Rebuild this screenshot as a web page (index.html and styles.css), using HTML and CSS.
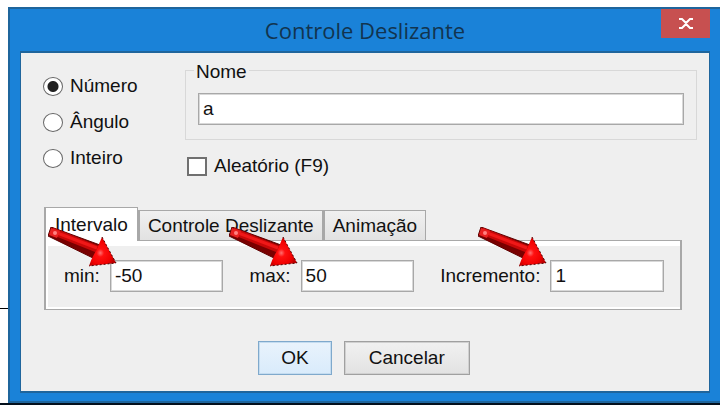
FILE: index.html
```html
<!DOCTYPE html>
<html lang="pt-BR">
<head>
    <meta charset="UTF-8">
    <title>Controle Deslizante</title>
    <link rel="stylesheet" href="styles.css">
</head>
<body>
    <div class="page">
        <div class="side-line"></div>
        <div class="dialog">
            <div class="title-bar">
                <h1>Controle Deslizante</h1>
                <button type="button" class="close-button" aria-label="Fechar">
                    <svg width="14" height="11" viewBox="0 0 14 11">
                        <path d="M0 1H3L7 5L11 1H14M0 10H3L7 6L11 10H14"/>
                    </svg>
                </button>
            </div>
            <form class="content">
                <div class="top-group">
                    <div class="radio-group">
                        <label><input type="radio" name="kind" checked>Número</label>
                        <label><input type="radio" name="kind">Ângulo</label>
                        <label><input type="radio" name="kind">Inteiro</label>
                    </div>
                    <div class="name-group">
                        <fieldset>
                            <legend><label for="nameInput">Nome</label></legend>
                            <input type="text" id="nameInput" value="a">
                        </fieldset>
                        <label class="random-row"><input type="checkbox">Aleatório (F9)</label>
                    </div>
                </div>

                <div class="tab-group">
                    <div class="tabs" role="tablist">
                        <button type="button" role="tab" aria-selected="true" class="tab active">Intervalo</button>
                        <button type="button" role="tab" aria-selected="false" class="tab">Controle Deslizante</button>
                        <button type="button" role="tab" aria-selected="false" class="tab">Animação</button>
                    </div>
                    <div class="tab-panel" role="tabpanel">
                        <label for="minInput">min:</label>
                        <input type="text" id="minInput" value="-50">
                        <label for="maxInput">max:</label>
                        <input type="text" id="maxInput" value="50">
                        <label for="stepInput">Incremento:</label>
                        <input type="text" id="stepInput" value="1">
                    </div>

                    <!-- Arrows pointing at the three fields -->
                    <svg class="arrow arrow-min" width="69" height="42" viewBox="0 0 69 42">
                        <defs>
                            <radialGradient id="head" cx="0.42" cy="0.55" r="0.55">
                                <stop offset="0" stop-color="#ff7070"/>
                                <stop offset="0.25" stop-color="#ff1010"/>
                                <stop offset="0.75" stop-color="#f00000"/>
                                <stop offset="1" stop-color="#c00000"/>
                            </radialGradient>
                            <g id="arrow">
                                <path d="M3 0L52 18L47 32L0 9Z" fill="#7a0000" stroke="#600000"/>
                                <path d="M4 4L49 22" stroke="#c80808" stroke-width="7" fill="none"/>
                                <path d="M4 4L49 21" stroke="#f01818" stroke-width="3" fill="none"/>
                                <path d="M3 1L12 4L9 11L1 8Z" fill="#e82020"/>
                                <circle cx="7" cy="6" r="2" fill="#ff8080"/>
                                <path d="M54 10L68 36L41 39Q44 30 48 24Z" fill="url(#head)"/>
                                <path d="M54 10L68 36L41 39" fill="none" stroke="#500000" stroke-dasharray="2 2"/>
                            </g>
                        </defs>
                        <use href="#arrow"/>
                    </svg>
                    <svg class="arrow arrow-max" width="69" height="42" viewBox="0 0 69 42"><use href="#arrow"/></svg>
                    <svg class="arrow arrow-step" width="69" height="42" viewBox="0 0 69 42"><use href="#arrow"/></svg>
                </div>

                <div class="button-group">
                    <button type="submit" class="ok-button">OK</button>
                    <button type="button">Cancelar</button>
                </div>
            </form>
        </div>
    </div>
</body>
</html>
```

FILE: styles.css
```css
* {
    box-sizing: border-box;
}
body {
    margin: 0;
    background: #fff;
    color: #111;
    font-family: "Liberation Sans", Arial, sans-serif;
    font-size: 19px;
    line-height: 22px;
}
input,
button {
    font: inherit;
    color: inherit;
}
.page {
    display: flex;
    align-items: stretch;
    min-height: 100vh;
    padding-top: 7px;
    border-bottom: 2px solid #04101c;
}
.side-line {
    width: 8px;
    height: 302px;
    border-bottom: 1px solid #000;
}
.dialog {
    flex: 1;
    display: flex;
    flex-direction: column;
    padding: 0 10px 8px;
    background: #1a82d8;
    border: 2px solid #1f659c;
    border-right: none;
}
.title-bar {
    display: grid;
    grid-template-columns: 1fr auto 1fr;
    align-items: start;
    height: 42px;
}
.title-bar h1 {
    grid-column: 2;
    margin: 0;
    font-family: "Open Sans", "Noto Sans", sans-serif;
    font-size: 22px;
    font-weight: 400;
    line-height: 42px;
    color: #12344f;
}
.close-button {
    justify-self: end;
    display: flex;
    align-items: center;
    justify-content: center;
    width: 49px;
    height: 29px;
    padding: 0;
    border: none;
    background: #c75050;
}
.close-button path {
    fill: none;
    stroke: #fff;
    stroke-width: 2;
}
.content {
    flex: 1;
    padding: 4px 12px 0 22px;
    background: #efefef;
    border: 2px solid #1f659c;
    border-left-width: 1px;
    border-right-width: 1px;
}
.top-group {
    display: grid;
    grid-template-columns: 142px 1fr;
}
.radio-group {
    display: flex;
    flex-direction: column;
    padding-top: 11px;
}
.radio-group label,
.random-row {
    display: flex;
    align-items: center;
    gap: 7px;
    height: 36px;
}
input[type="radio"],
input[type="checkbox"] {
    appearance: none;
    width: 20px;
    height: 19px;
    margin: 0;
    background: #fff;
    border: 1px solid #666;
}
input[type="radio"] {
    border-radius: 50%;
}
input[type="radio"]:checked {
    background: radial-gradient(circle, #222 5px, #fff 6px);
}
input[type="checkbox"] {
    border: 2px solid #707070;
}
fieldset {
    margin: 0;
    padding: 10px 12px 14px;
    border: 1px solid #d8d8d8;
}
legend {
    margin-left: -4px;
    padding: 4px 2px 0;
}
input[type="text"] {
    display: block;
    width: 100%;
    min-width: 0;
    height: 32px;
    padding: 0 4px;
    background: #fff;
    border: 1px solid #a8a8a8;
    box-shadow: inset 0 0 0 1px #d8d8d8;
    outline: none;
}
.random-row {
    margin-top: 8px;
    padding-left: 2px;
}
.tab-group {
    position: relative;
    margin: 23px 15px 0 1px;
}
.tabs {
    display: flex;
    align-items: flex-end;
}
.tab {
    height: 30px;
    padding: 0 8px;
    border: 1px solid #a8a8a8;
    border-left-width: 2px;
    border-bottom: none;
    background: linear-gradient(#f0f0f0, #e2e2e2);
}
.tab.active {
    position: relative;
    height: 34px;
    padding: 0 9px;
    margin-bottom: -1px;
    background: #fff;
}
.tab-panel {
    display: grid;
    grid-template-columns: auto 1fr auto 1fr auto 1fr;
    align-items: center;
    column-gap: 10px;
    height: 70px;
    padding: 2px 16px 0 18px;
    border: 2px solid #a8a8a8;
    border-width: 1px 2px;
    box-shadow: inset 2px 5px #fff, inset 0 -2px #fff;
}
.tab-panel input + label {
    margin-left: 16px;
}
.arrow {
    position: absolute;
    top: 20px;
}
.arrow-min {
    left: 4px;
}
.arrow-max {
    left: 29%;
}
.arrow-step {
    left: 68%;
}
.button-group {
    display: flex;
    justify-content: center;
    gap: 12px;
    margin-top: 31px;
    padding-right: 12px;
}
.button-group button {
    height: 34px;
    padding: 0 24px;
    border: 1px solid #a0a0a0;
    box-shadow: inset 0 0 0 1px #d0d0d0;
    background: linear-gradient(#f1f1f1, #e2e2e2);
}
.button-group .ok-button {
    padding: 0 22px;
    border-color: #7fa9cc;
    box-shadow: inset 0 0 0 1px #c4dcf0;
    background: linear-gradient(#e9f3fc, #d9ebfb);
}
```
